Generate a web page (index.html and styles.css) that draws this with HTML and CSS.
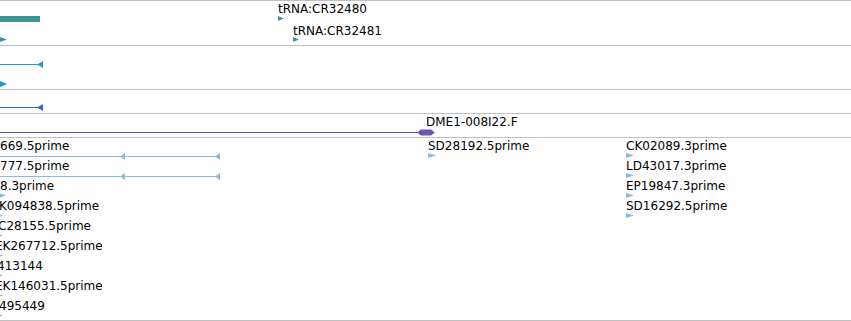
FILE: index.html
```html
<!DOCTYPE html>
<html>
<head>
	<meta charset="utf-8">
	<title>tracks</title>
	<link rel="stylesheet" href="styles.css">
</head>
<body>
	<div id="tracks">
		<!-- tRNA track -->
		<div class="track t1">
			<svg width="851" height="44" viewBox="0 1 851 44">
				<rect class="teal" x="0" y="16" width="40" height="6" />
				<polygon class="teal" points="0,37 7,39.5 0,42" />
				<text x="278" y="13">tRNA:CR32480</text>
				<polygon class="teal" points="278,16 284,18.5 278,21" />
				<text x="293" y="35">tRNA:CR32481</text>
				<polygon class="teal" points="293,37 299,39.5 293,42" />
			</svg>
		</div>
		<div class="track t2">
			<svg width="851" height="43" viewBox="0 46 851 43">
				<line class="cyan" x1="0" y1="64.5" x2="40" y2="64.5" />
				<polygon class="cyan" points="37,64.5 43,61 43,68" />
				<polygon class="cyan" points="0,81 7,84 0,87" />
			</svg>
		</div>
		<div class="track t3">
			<svg width="851" height="23" viewBox="0 90 851 23">
				<line class="blue" x1="0" y1="107.5" x2="40" y2="107.5" />
				<polygon class="blue" points="37,107.5 43,104 43,111" />
			</svg>
		</div>
		<div class="track t4">
			<svg width="851" height="23" viewBox="0 114 851 23">
				<line class="purple" x1="0" y1="132.5" x2="420" y2="132.5" />
				<polygon class="purple" points="417,132.5 421,129.5 431,129.5 435,132.5 431,135.5 421,135.5" />
				<text x="426" y="126">DME1-008I22.F</text>
			</svg>
		</div>
		<!-- EST track -->
		<div class="track t5">
			<svg width="851" height="182" viewBox="0 138 851 182">
				<text x="0" y="150">669.5prime</text>
				<line class="ltblue" x1="0" y1="156.5" x2="220" y2="156.5" />
				<polygon class="ltblue" points="120,156.5 125,153 125,160" />
				<polygon class="ltblue" points="215,156.5 220,153 220,160" />

				<text x="0" y="170">777.5prime</text>
				<line class="ltblue" x1="0" y1="176.5" x2="220" y2="176.5" />
				<polygon class="ltblue" points="120,176.5 125,173 125,180" />
				<polygon class="ltblue" points="215,176.5 220,173 220,180" />

				<text x="0" y="190">8.3prime</text>
				<polygon class="ltblue" points="-1,193 6,195.5 -1,198" />
				<text x="-1" y="210">K094838.5prime</text>
				<polygon class="ltblue" points="-4,213 3,215.5 -4,218" />
				<text x="-2" y="230">C28155.5prime</text>
				<polygon class="ltblue" points="-4,233 3,235.5 -4,238" />
				<text x="-5" y="250">EK267712.5prime</text>
				<polygon class="ltblue" points="-4,253 3,255.5 -4,258" />
				<text x="-3" y="270">413144</text>
				<polygon class="ltblue" points="-4,273 3,275.5 -4,278" />
				<text x="-5" y="290">EK146031.5prime</text>
				<polygon class="ltblue" points="-4,293 3,295.5 -4,298" />
				<text x="-1" y="310">495449</text>
				<polygon class="ltblue" points="-4,313 3,315.5 -4,318" />

				<text x="428" y="150">SD28192.5prime</text>
				<polygon class="ltblue" points="428,153 436,155.5 428,158" />

				<text x="626" y="150">CK02089.3prime</text>
				<polygon class="ltblue" points="626,153 634,155.5 626,158" />
				<text x="626" y="170">LD43017.3prime</text>
				<polygon class="ltblue" points="626,173 634,175.5 626,178" />
				<text x="626" y="190">EP19847.3prime</text>
				<polygon class="ltblue" points="626,193 634,195.5 626,198" />
				<text x="626" y="210">SD16292.5prime</text>
				<polygon class="ltblue" points="626,213 634,215.5 626,218" />
			</svg>
		</div>
	</div>
</body>
</html>
```

FILE: styles.css
```css
*{margin: 0;padding: 0;}
body {
	background: #ffffff;
	font-family: "DejaVu Sans", sans-serif;
}
#tracks {
	width: 851px;
	border-top: 1px solid #c0c0c0;
}
.track {
	border-bottom: 1px solid #c0c0c0;
}
.track svg {
	display: block;
}
.t1 { height: 44px; }
.t2 { height: 43px; }
.t3 { height: 23px; }
.t4 { height: 23px; }
.t5 { height: 182px; }
text {
	font-family: "DejaVu Sans", sans-serif;
	font-size: 12px;
	fill: #000000;
}
line {
	stroke-width: 1;
}
rect.teal, polygon.teal {
	fill: #409494;
}
line.cyan { stroke: #1a9cc6; }
polygon.cyan { fill: #1a9cc6; }
line.blue { stroke: #2f6acc; }
polygon.blue { fill: #2f6acc; }
line.purple { stroke: #7052b0; }
polygon.purple { fill: #7052b0; }
line.ltblue { stroke: #88bbde; }
polygon.ltblue { fill: #88bbde; }
```
